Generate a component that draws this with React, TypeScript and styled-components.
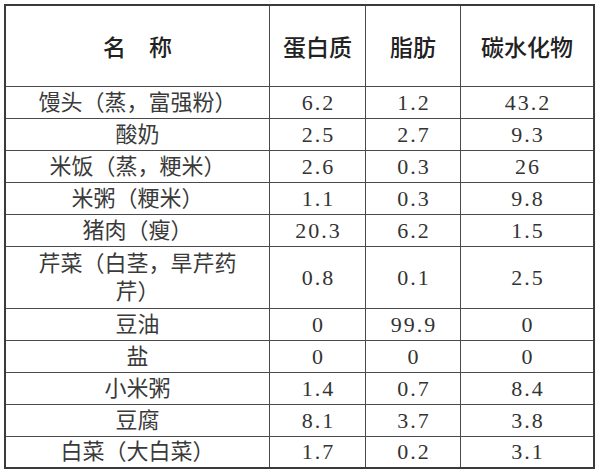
import styled, { createGlobalStyle } from "styled-components";

interface IFood {
  name: string[];
  protein: string;
  fat: string;
  carbs: string;
}

const foods: IFood[] = [
  { name: ["馒头（蒸，富强粉）"], protein: "6.2", fat: "1.2", carbs: "43.2" },
  { name: ["酸奶"], protein: "2.5", fat: "2.7", carbs: "9.3" },
  { name: ["米饭（蒸，粳米）"], protein: "2.6", fat: "0.3", carbs: "26" },
  { name: ["米粥（粳米）"], protein: "1.1", fat: "0.3", carbs: "9.8" },
  { name: ["猪肉（瘦）"], protein: "20.3", fat: "6.2", carbs: "1.5" },
  { name: ["芹菜（白茎，旱芹药", "芹）"], protein: "0.8", fat: "0.1", carbs: "2.5" },
  { name: ["豆油"], protein: "0", fat: "99.9", carbs: "0" },
  { name: ["盐"], protein: "0", fat: "0", carbs: "0" },
  { name: ["小米粥"], protein: "1.4", fat: "0.7", carbs: "8.4" },
  { name: ["豆腐"], protein: "8.1", fat: "3.7", carbs: "3.8" },
  { name: ["白菜（大白菜）"], protein: "1.7", fat: "0.2", carbs: "3.1" },
];

const headers = ["名　称", "蛋白质", "脂肪", "碳水化物"];

export default function App() {
  return (
    <>
      <GlobalStyle />
      <Page>
        <Grid>
          {headers.map((h) => (
            <HeadCell key={h}>{h}</HeadCell>
          ))}
          {foods.map((f) => (
            <Row key={f.name.join("")}>
              <NameCell>
                {f.name.map((line) => (
                  <span key={line}>{line}</span>
                ))}
              </NameCell>
              <NumCell>{f.protein}</NumCell>
              <NumCell>{f.fat}</NumCell>
              <NumCell>{f.carbs}</NumCell>
            </Row>
          ))}
        </Grid>
      </Page>
    </>
  );
}

const GlobalStyle = createGlobalStyle`
  body {
    margin: 0;
    background: #ffffff;
  }
`;

const Page = styled.div`
  padding: 4px 0 0 4px;
`;

const Grid = styled.div`
  display: grid;
  grid-template-columns: 263px 95px 94px 132px;
  grid-template-rows: 80px repeat(5, 31px) 61px repeat(4, 31px) 30px;
  gap: 1px;
  width: max-content;
  background: #4a4a4a;
  border: 2px solid #3a3a3a;
  font-family: "Liberation Serif", "Noto Sans CJK SC", serif;
  color: #333333;
`;

const Row = styled.div`
  display: contents;
`;

const Cell = styled.div`
  display: flex;
  flex-direction: column;
  align-items: center;
  justify-content: center;
  background: #ffffff;
`;

const HeadCell = styled(Cell)`
  font-size: 23px;
  font-weight: 500;
  color: #222222;
`;

const NameCell = styled(Cell)`
  font-size: 22px;
  line-height: 28px;
  color: #3a3a3a;
`;

const NumCell = styled(Cell)`
  font-size: 22px;
  letter-spacing: 2px;
  padding-left: 2px;
  color: #333333;
`;
